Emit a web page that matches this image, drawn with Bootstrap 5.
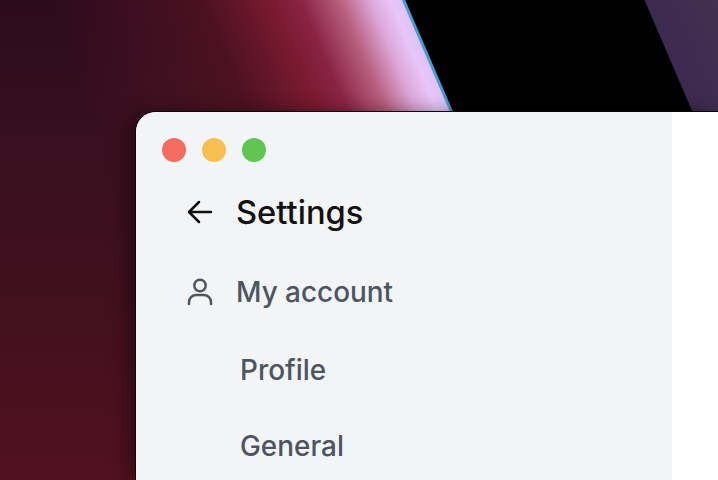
<!DOCTYPE html>
<html lang="en">
<head>
<meta charset="utf-8">
<title>Settings</title>
<link href="https://cdn.jsdelivr.net/npm/bootstrap@5.3.0/dist/css/bootstrap.min.css" rel="stylesheet">
<style>
html, body { height: 480px; }
body {
  overflow: hidden;
  font-family: Inter, "Liberation Sans", sans-serif;
  padding: 112px 0 0 136px;
  background-color: #2e0b1d;
  background-image:
    linear-gradient(66.8deg, transparent 558px, #4a9ad0 559px, #4a9ad0 561px, #000 562px, #000 781px, #3c2a50 782px, #43304f 849px),
    linear-gradient(66.8deg, rgba(90,18,36,0) 230px, rgba(84,19,34,.75) 373px, #7a1a30 437px, #8a2445 465px, #b8607f 501px, #dca8d8 529px, #e8c6fa 548px, #dcc4f2 559px, transparent 559px),
    linear-gradient(180deg, #2c0a1e 0, #38101f 140px, #42101f 300px, #52111f 480px);
}
.app-window {
  height: 368px;
  background: #fff;
  border-top-left-radius: 20px;
  box-shadow: 0 -1px 0 #0b0408, -1px 0 0 #14060c, -8px 0 18px rgba(0,0,0,.4);
  overflow: hidden;
}
.app-side { width: 536px; height: 100%; background: #f3f4f6; padding: 26px 0 0 26px; }
.light { width: 24px; height: 24px; border-radius: 50%; }
.light-red { background: #f26d5f; }
.light-amber { background: #f6bf50; }
.light-green { background: #61c554; }
.lights { gap: 16px; }
.nav-icon { width: 32px; height: 32px; flex: none; fill: none; stroke-width: 2.5; stroke-linecap: round; stroke-linejoin: round; }
.head-row { margin: 34px 0 0 22px; gap: 20px; height: 32px; }
.head-row h1 { font-size: 32.7px; font-weight: 500; margin: 0; line-height: 32px; color: #111; }
.head-row .nav-icon { stroke: #111; }
.acct-row { margin: 48px 0 0 22px; gap: 20px; height: 32px; }
.acct-row .nav-icon { stroke: #4b5563; }
.acct-label { font-size: 27.9px; font-weight: 500; color: #4b5563; line-height: 32px; }
.sub-menu { margin: 0 0 0 78px; padding: 0; list-style: none; }
.sub-menu li { font-size: 27.9px; font-weight: 500; color: #4b5563; line-height: 32px; margin-top: 44px; }
.sub-menu li:first-child { margin-top: 46px; }
</style>
</head>
<body>
<div class="app-window d-flex">
  <aside class="app-side">
    <div class="d-flex lights">
      <span class="light light-red"></span>
      <span class="light light-amber"></span>
      <span class="light light-green"></span>
    </div>
    <div class="d-flex align-items-center head-row">
      <svg class="nav-icon" viewBox="0 0 32 32" aria-hidden="true"><path d="M27 16H5M15 6 5 16l10 10"/></svg>
      <h1>Settings</h1>
    </div>
    <div class="d-flex align-items-center acct-row">
      <svg class="nav-icon" viewBox="0 0 32 32" aria-hidden="true"><circle cx="16" cy="9.5" r="5.7"/><path d="M5 28v-2a7 7 0 0 1 7-7h8a7 7 0 0 1 7 7v2"/></svg>
      <span class="acct-label">My account</span>
    </div>
    <ul class="sub-menu">
      <li>Profile</li>
      <li>General</li>
    </ul>
  </aside>
  <div class="flex-grow-1"></div>
</div>
<script src="https://cdn.jsdelivr.net/npm/bootstrap@5.3.0/dist/js/bootstrap.bundle.min.js"></script>
</body>
</html>
